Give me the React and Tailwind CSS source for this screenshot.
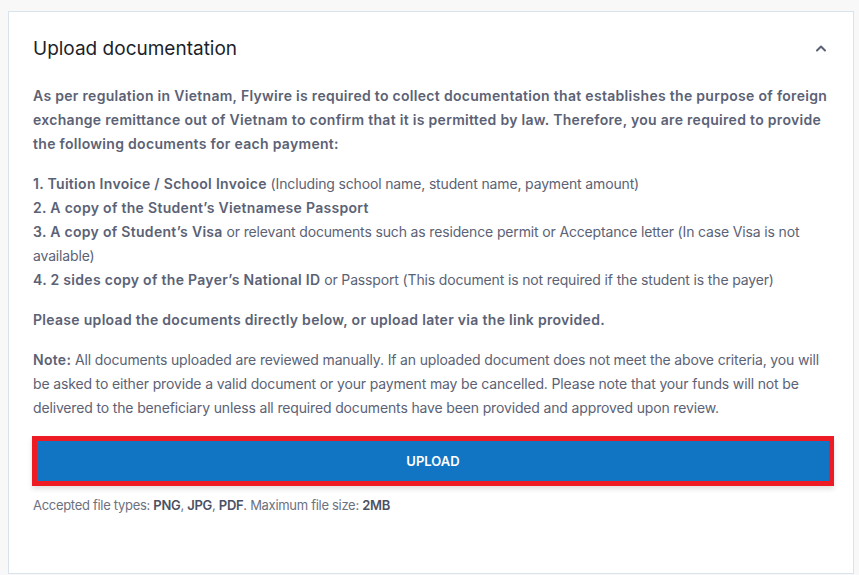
import { useState } from 'react'

function App() {
  const [open, setOpen] = useState(true)

  const strong = 'font-semibold tracking-[0.3px]'

  return (
    <div className="min-h-[575px] w-full bg-[#f8f8f8] pt-[11px] pl-[8px] pr-[5px] pb-px font-['Inter','Open_Sans',sans-serif]">
      <div className="h-[563px] border border-[#d9e3ee] bg-white px-6">
        {/* Header */}
        <div className="flex h-[72px] items-center justify-between">
          <h2 className="pt-[3px] text-[19px] font-normal text-[#1b1f2b]">Upload documentation</h2>
          <button onClick={() => setOpen(!open)} className="mr-[-2px] flex h-5 w-5 items-center justify-center text-[#5b6275]">
            <svg width="12" height="8" viewBox="0 0 12 8" fill="none">
              <path d="M2 6.5 L6 2.5 L10 6.5" stroke="currentColor" strokeWidth="2" strokeLinecap="round" strokeLinejoin="round" />
            </svg>
          </button>
        </div>

        {open && (
          <div className="text-[14px] leading-6 tracking-[-0.15px] text-[#5b6275]">
            <p className={strong}>
              As per regulation in Vietnam, Flywire is required to collect documentation that establishes the purpose of foreign exchange remittance out of Vietnam to confirm that it is permitted by law. Therefore, you are required to provide the following documents for each payment:
            </p>

            <ul className="mt-4">
              <li><b className={strong}>1. Tuition Invoice / School Invoice</b> (Including school name, student name, payment amount)</li>
              <li><b className={strong}>2. A copy of the Student’s Vietnamese Passport</b></li>
              <li><b className={strong}>3. A copy of Student’s Visa</b> or relevant documents such as residence permit or Acceptance letter (In case Visa is not available)</li>
              <li><b className={strong}>4. 2 sides copy of the Payer’s National ID</b> or Passport (This document is not required if the student is the payer)</li>
            </ul>

            <p className={`mt-4 ${strong}`}>Please upload the documents directly below, or upload later via the link provided.</p>

            <p className="mt-4">
              <b className={strong}>Note:</b> All documents uploaded are reviewed manually. If an uploaded document does not meet the above criteria, you will be asked to either provide a valid document or your payment may be cancelled. Please note that your funds will not be delivered to the beneficiary unless all required documents have been provided and approved upon review.
            </p>

            <button className="mt-4 -ml-px flex h-[50px] w-[802px] items-center justify-center border-[5px] border-[#ed1c24] bg-[#1275c4] text-[13px] font-semibold tracking-normal text-white shadow-[0_3px_5px_rgba(0,0,0,0.12)]">
              UPLOAD
            </button>

            <p className="mt-[9px] text-[13px] leading-5 tracking-[-0.3px] text-[#6b7180]">
              Accepted file types: <b className="font-semibold text-[#4b5162]">PNG</b>, <b className="font-semibold text-[#4b5162]">JPG</b>, <b className="font-semibold text-[#4b5162]">PDF</b>. Maximum file size: <b className="font-semibold text-[#4b5162]">2MB</b>
            </p>
          </div>
        )}
      </div>
    </div>
  )
}

export default App
